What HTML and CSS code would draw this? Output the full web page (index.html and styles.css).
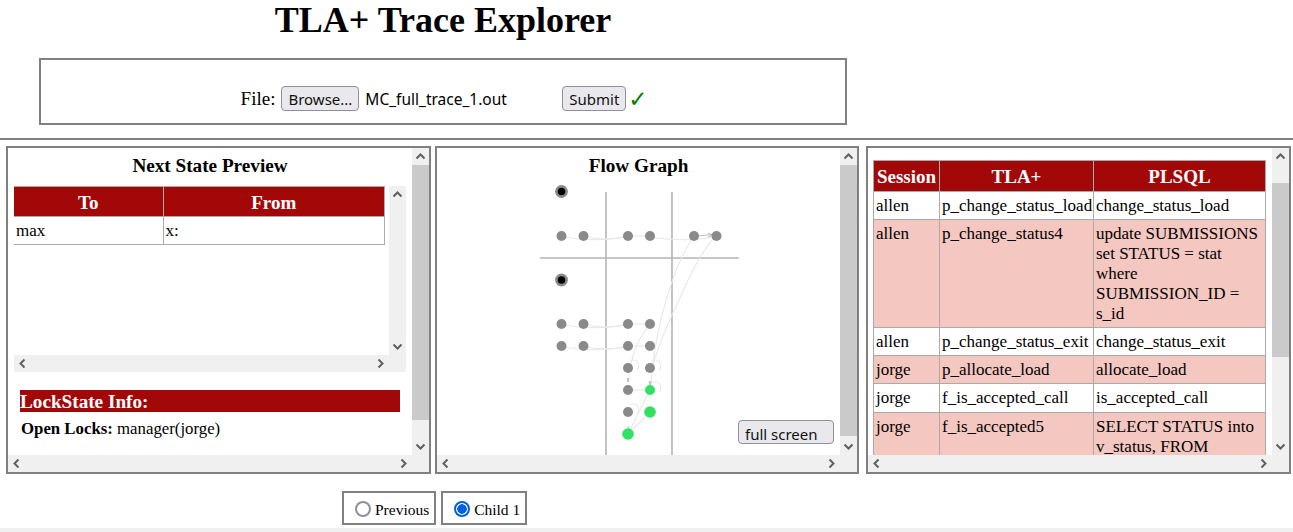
FILE: index.html
```html
<!DOCTYPE html>
<html lang="en">
<head>
    <meta charset="UTF-8">
    <title>TLA+ Trace Explorer</title>
    <link rel="stylesheet" href="styles.css">
</head>
<body>

    <!-- file upload -->
    <header class="top">
        <h1>TLA+ Trace Explorer</h1>
        <form class="upload">
            <span class="file-label">File:</span>
            <button type="button" class="btn browse">Browse...</button>
            <span class="file-name">MC_full_trace_1.out</span>
            <button type="button" class="btn">Submit</button>
            <span class="check">✓</span>
        </form>
    </header>

    <hr class="divider">

    <main class="panels">
        <!-- next state -->
        <section class="panel panel-left">
            <div class="view">
                <h2>Next State Preview</h2>
                <div class="state-box">
                    <div class="view">
                        <table class="grid state-table">
                            <colgroup><col class="col-to"><col class="col-from"></colgroup>
                            <tr><th>To</th><th>From</th></tr>
                            <tr><td>max</td><td>x:</td></tr>
                        </table>
                    </div>
                    <div class="vbar"><span class="sb-btn up"></span><div class="track"></div><span class="sb-btn down"></span></div>
                    <div class="hbar"><span class="sb-btn left"></span><span class="sb-btn right"></span></div>
                    <div class="corner"></div>
                </div>
                <h3>LockState Info:</h3>
                <p class="locks"><b>Open Locks:</b> manager(jorge)</p>
            </div>
            <div class="vbar"><span class="sb-btn up"></span><div class="track"><div class="thumb thumb-left"></div></div><span class="sb-btn down"></span></div>
            <div class="hbar"><span class="sb-btn left"></span><span class="sb-btn right"></span></div>
            <div class="corner"></div>
        </section>

        <!-- graph -->
        <section class="panel panel-mid">
            <div class="view">
                <h2 class="graph-title">Flow Graph</h2>
                <svg class="graph" viewBox="437 180 403 275" aria-label="Flow graph">
                    <g class="guides">
                        <path d="M606 192V456M672 192V456M540 258H739"/>
                    </g>
                    <g class="edges">
                        <path d="M561 236C580 241 610 241 628 236"/>
                        <path d="M583 236C598 240 612 240 628 236"/>
                        <path d="M628 236H650"/>
                        <path d="M650 236C665 241 700 241 716 236"/>
                        <path d="M694 236C680 255 668 290 662 315S652 365 651 384"/>
                        <path d="M716 236C695 258 682 295 672 315S655 360 652 366"/>
                        <path d="M561 324C580 329 610 329 628 324"/>
                        <path d="M583 324C598 328 612 328 628 324"/>
                        <path d="M628 324H650"/>
                        <path d="M561 346C580 351 610 351 628 346"/>
                        <path d="M583 346C598 350 612 350 628 346"/>
                        <path d="M628 346H650"/>
                        <path d="M650 324C634 344 632 356 628 382"/>
                        <path d="M628 390H650"/>
                        <path d="M650 390L628 434"/>
                        <path d="M650 412L628 434"/>
                        <path d="M630 361C636 358 640 362 638 370"/>
                        <path d="M652 361C658 358 662 362 660 370"/>
                        <path d="M652 383C658 380 662 384 660 392"/>
                        <path d="M630 405C636 402 640 406 638 414"/>
                    </g>
                    <g class="arrows">
                        <path d="M698 236L712 234.5M708 233L713 235L708 237"/>
                        <path d="M623 235L627 236L623 237M645 235L649 236L645 237"/>
                        <path d="M623 323L627 324L623 325M623 345L627 346L623 347M645 345L649 346L645 347"/>
                        <path d="M627 378L628 382L629 378M649 381L650 385L651 381M629 426L627 430L631 429"/>
                    </g>
                    <circle class="start-ring" cx="561.5" cy="191.5" r="6.4"/>
                    <circle class="start-ring" cx="561.5" cy="280" r="6.4"/>
                    <circle class="start-dot" cx="561.5" cy="191.5" r="3.8"/>
                    <circle class="start-dot" cx="561.5" cy="280" r="3.8"/>
                    <g class="nodes">
                        <circle cx="561.5" cy="236" r="5"/><circle cx="583.5" cy="236" r="5"/>
                        <circle cx="628" cy="236" r="5"/><circle cx="650" cy="236" r="5"/>
                        <circle cx="694" cy="236" r="5"/><circle cx="716.5" cy="236" r="5"/>
                        <circle cx="561.5" cy="324" r="5"/><circle cx="583.5" cy="324" r="5"/>
                        <circle cx="628" cy="324" r="5"/><circle cx="650" cy="324" r="5"/>
                        <circle cx="561.5" cy="346" r="5"/><circle cx="583.5" cy="346" r="5"/>
                        <circle cx="628" cy="346" r="5"/><circle cx="650" cy="346" r="5"/>
                        <circle cx="628" cy="368" r="5"/><circle cx="650" cy="368" r="5"/>
                        <circle cx="628" cy="390" r="5"/><circle cx="628" cy="412" r="5"/>
                    </g>
                    <g class="nodes-done">
                        <circle cx="650" cy="390" r="5"/>
                        <circle cx="650" cy="412" r="5.8"/>
                        <circle cx="628" cy="434" r="5.8"/>
                    </g>
                </svg>
            </div>
            <div class="vbar"><span class="sb-btn up"></span><div class="track"><div class="thumb thumb-mid"></div></div><span class="sb-btn down"></span></div>
            <div class="hbar"><span class="sb-btn left"></span><span class="sb-btn right"></span></div>
            <div class="corner"></div>
            <button type="button" class="btn full-screen">full screen</button>
        </section>

        <!-- trace table -->
        <section class="panel panel-right">
            <div class="view">
                <table class="grid trace-table">
                    <colgroup><col class="col-session"><col class="col-tla"><col class="col-sql"></colgroup>
                    <tr><th>Session</th><th>TLA+</th><th>PLSQL</th></tr>
                    <tr><td>allen</td><td>p_change_status_load</td><td>change_status_load</td></tr>
                    <tr class="hit"><td>allen</td><td>p_change_status4</td><td>update SUBMISSIONS set STATUS = stat where SUBMISSION_ID = s_id</td></tr>
                    <tr><td>allen</td><td>p_change_status_exit</td><td>change_status_exit</td></tr>
                    <tr class="hit"><td>jorge</td><td>p_allocate_load</td><td>allocate_load</td></tr>
                    <tr class="tall"><td>jorge</td><td>f_is_accepted_call</td><td>is_accepted_call</td></tr>
                    <tr class="hit"><td>jorge</td><td>f_is_accepted5</td><td>SELECT STATUS into v_status, FROM</td></tr>
                </table>
            </div>
            <div class="vbar"><span class="sb-btn up"></span><div class="track"><div class="thumb thumb-right"></div></div><span class="sb-btn down"></span></div>
            <div class="hbar"><span class="sb-btn left"></span><span class="sb-btn right"></span></div>
            <div class="corner"></div>
        </section>
    </main>

    <!-- next step choice -->
    <nav class="steps">
        <label class="step"><input type="radio" name="step"><span>Previous</span></label>
        <label class="step"><input type="radio" name="step" checked><span>Child 1</span></label>
    </nav>

    <div class="bottom-strip"></div>

</body>
</html>
```

FILE: styles.css
```css
html, body {
    margin: 0;
    height: 100%;
}
body {
    height: 532px;
    overflow: hidden;
    display: flex;
    flex-direction: column;
    font-family: "Liberation Serif", "Times New Roman", serif;
    font-size: 17px;
    color: #000;
    background: #fff;
}

/* top */
.top {
    width: 886px;
    text-align: center;
}
h1 {
    margin: 0;
    font-size: 36px;
    line-height: 41px;
}
.upload {
    box-sizing: border-box;
    width: 808px;
    height: 67px;
    margin: 17px auto 0;
    padding: 14px 0 0 2px;
    border: 2px solid #808080;
    display: flex;
    justify-content: center;
    align-items: center;
}
.file-label {
    margin-right: 6px;
    font-size: 19px;
}
.btn {
    height: 25px;
    padding: 0 6px;
    font-family: "Noto Sans", "Liberation Sans", sans-serif;
    font-size: 15px;
    color: #111;
    background: #e9e9ed;
    border: 1px solid #8f8f9d;
    border-radius: 4px;
}
.file-name {
    width: 197px;
    margin-left: 6px;
    font-family: "Noto Sans", "Liberation Sans", sans-serif;
    font-size: 15.5px;
    text-align: left;
}
.check {
    width: 21px;
    font-family: "DejaVu Sans", sans-serif;
    font-size: 23px;
    font-weight: bold;
    color: #008000;
    text-align: right;
}
.divider {
    width: 100%;
    height: 2px;
    box-sizing: border-box;
    margin: 13px 0 6px;
    border: 0;
    background: #808080;
}

/* panels */
.panels {
    display: flex;
    padding-left: 6px;
}
.panel {
    box-sizing: border-box;
    position: relative;
    height: 328px;
    border: 2px solid #808080;
    display: grid;
    grid-template-columns: 1fr 17px;
    grid-template-rows: 1fr 17px;
}
.panel-left {
    width: 425px;
    margin-right: 4px;
}
.panel-mid {
    width: 424px;
    margin-right: 7px;
}
.panel-right {
    width: 425px;
}
.view {
    overflow: hidden;
    min-width: 0;
    min-height: 0;
}
h2 {
    margin: 0;
    padding-top: 8px;
    font-size: 19.2px;
    line-height: 20px;
    text-align: center;
}
.graph-title {
    padding-bottom: 4px;
}

/* drawn scrollbars */
.vbar {
    display: flex;
    flex-direction: column;
    background: #f0f0f0;
}
.hbar {
    display: flex;
    justify-content: space-between;
    background: #f0f0f0;
}
.corner {
    background: #f0f0f0;
}
.track {
    flex: 1;
}
.thumb {
    background: #cacaca;
}
.thumb-left {
    height: 255px;
}
.thumb-mid {
    height: 271px;
}
.thumb-right {
    height: 174px;
    margin-top: 18px;
}
.sb-btn {
    display: block;
    flex: none;
    width: 17px;
    height: 17px;
    background-repeat: no-repeat;
    background-position: center;
}
.up {
    background-image: url("data:image/svg+xml,%3Csvg xmlns='http://www.w3.org/2000/svg' width='17' height='17'%3E%3Cpath d='M4.5 10.5L8.5 6.5L12.5 10.5' fill='none' stroke='%23606060' stroke-width='2'/%3E%3C/svg%3E");
}
.down {
    background-image: url("data:image/svg+xml,%3Csvg xmlns='http://www.w3.org/2000/svg' width='17' height='17'%3E%3Cpath d='M4.5 6.5L8.5 10.5L12.5 6.5' fill='none' stroke='%23606060' stroke-width='2'/%3E%3C/svg%3E");
}
.left {
    background-image: url("data:image/svg+xml,%3Csvg xmlns='http://www.w3.org/2000/svg' width='17' height='17'%3E%3Cpath d='M10.5 4.5L6.5 8.5L10.5 12.5' fill='none' stroke='%23606060' stroke-width='2'/%3E%3C/svg%3E");
}
.right {
    background-image: url("data:image/svg+xml,%3Csvg xmlns='http://www.w3.org/2000/svg' width='17' height='17'%3E%3Cpath d='M6.5 4.5L10.5 8.5L6.5 12.5' fill='none' stroke='%23606060' stroke-width='2'/%3E%3C/svg%3E");
}

/* tables */
.grid {
    border-collapse: collapse;
    table-layout: fixed;
    line-height: 20px;
}
.grid th {
    padding: 5px 2px 3px;
    font-size: 19px;
    line-height: 21px;
    color: #fff;
    background: #a30808;
    border: 1px solid #aaa;
}
.grid td {
    padding: 4px 2px 3px;
    vertical-align: top;
    border: 1px solid #aaa;
}
.hit td {
    background: #f4c7c0;
}

/* next state panel */
.state-box {
    width: 392px;
    height: 186px;
    margin: 10px 0 0 6px;
    display: grid;
    grid-template-columns: 1fr 17px;
    grid-template-rows: 1fr 17px;
}
.state-table {
    width: 371px;
}
.state-table th:first-child,
.state-table td:first-child {
    border-left: 0;
}
.col-to {
    width: 149px;
}
h3 {
    margin: 18px 12px 0;
    padding-top: 1px;
    font-size: 19.2px;
    line-height: 21px;
    color: #fff;
    background: #a30808;
}
.locks {
    margin: 7px 12px 0 13px;
    font-size: 16.8px;
    line-height: 20px;
}

/* graph panel */
.graph {
    display: block;
    width: 403px;
    height: 275px;
    filter: blur(0.35px);
}
.guides path {
    fill: none;
    stroke: #b4b4b4;
    stroke-width: 1.6;
}
.edges path {
    fill: none;
    stroke: #e8e8e8;
    stroke-width: 1.1;
}
.arrows path {
    fill: none;
    stroke: #aaa;
    stroke-width: 0.8;
}
.start-ring {
    fill: #8a8a8a;
}
.start-dot {
    fill: #000;
}
.nodes circle {
    fill: #8a8a8a;
}
.nodes-done circle {
    fill: #32e063;
}
.full-screen {
    position: absolute;
    left: 301px;
    top: 272px;
    width: 96px;
    height: 24px;
    padding: 2px 0 0 6px;
    line-height: 22px;
    text-align: left;
}

/* trace panel */
.trace-table {
    width: 393px;
    margin: 12px 0 0 5px;
}
.trace-table th {
    padding: 5px 2px 4px;
}
.tall td {
    padding-bottom: 4px;
}
.col-session {
    width: 66px;
}
.col-tla {
    width: 154px;
}

/* bottom */
.steps {
    display: flex;
    gap: 5px;
    padding: 17px 0 0 342px;
}
.step {
    box-sizing: border-box;
    height: 34px;
    padding: 0 5px 0 11px;
    display: flex;
    align-items: center;
    gap: 4px;
    font-size: 15.5px;
    white-space: nowrap;
    border: 2px solid #808080;
}
.step:last-child {
    width: 86px;
}
.step span {
    margin-top: 3px;
}
.step input {
    appearance: none;
    box-sizing: border-box;
    width: 16px;
    height: 16px;
    margin: 2px 0 0;
    border: 2px solid #8f8f9d;
    border-radius: 50%;
    background: #fff;
}
.step input:checked {
    border-color: #0060df;
    background: radial-gradient(circle, #0060df 0 4.5px, #fff 5px);
}
.bottom-strip {
    flex: 1;
    margin-top: 3px;
    background: #f0f0f0;
}
```
